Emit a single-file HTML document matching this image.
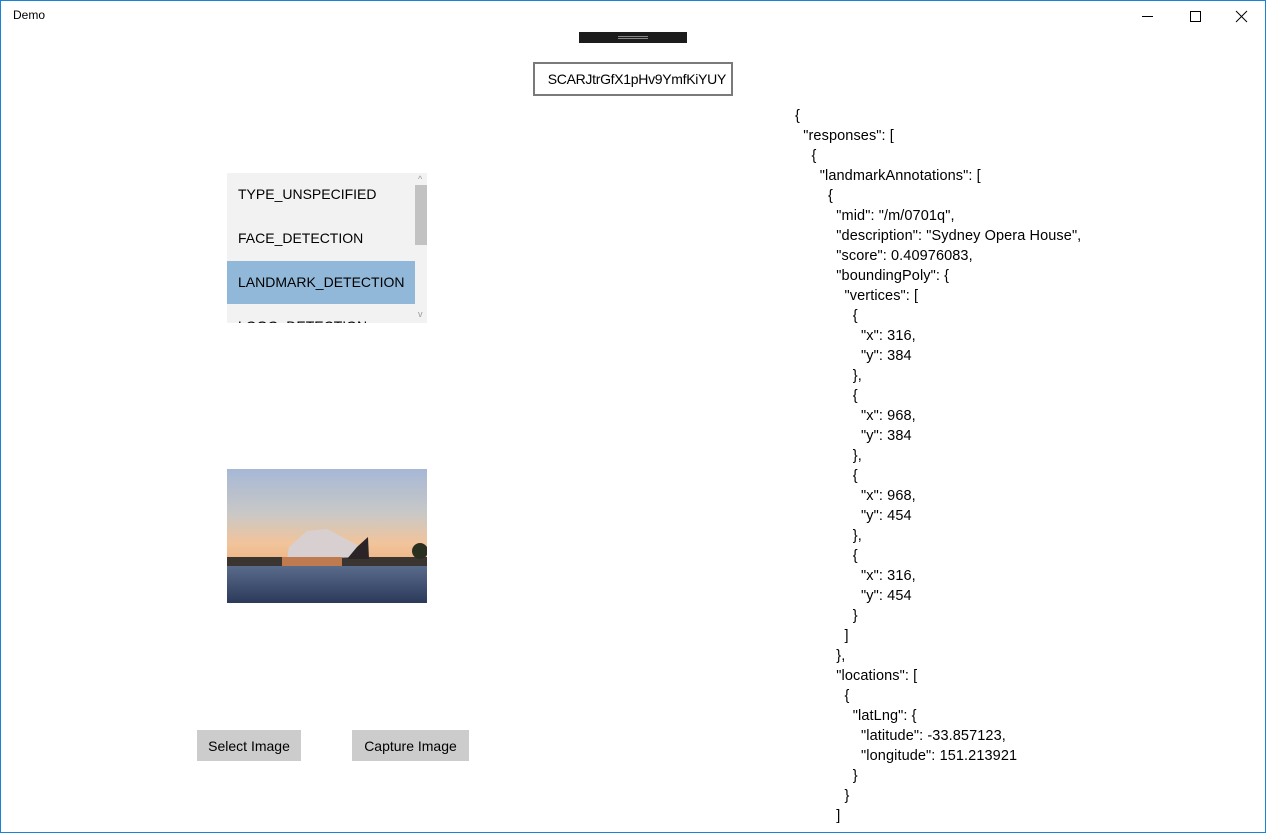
<!DOCTYPE html>
<html><head><style>
body{margin:0;width:1266px;height:833px;overflow:hidden;background:#fff;font-family:"Segoe UI","Liberation Sans",sans-serif;position:relative}
.frame{position:absolute;left:0;top:0;width:1264px;height:831px;border:1px solid #1883d7}
.t{position:absolute;font-size:12px;color:#000}
.json{position:absolute;left:795px;top:106px;font-size:14.5px;line-height:20px;color:#000;white-space:pre;letter-spacing:0.1px}
.list{position:absolute;left:227px;top:173px;width:200px;height:150px;background:#f2f2f2;overflow:hidden}
.item{position:absolute;left:0;width:188px;height:43px;font-size:14px;line-height:43px;padding-left:11px;box-sizing:border-box}
.btn{position:absolute;top:730px;height:31px;background:#ccc;font-size:14px;line-height:33px;text-align:center}
</style></head><body>
<div class="frame"></div>
<div class="t" style="left:13px;top:8px">Demo</div>
<svg style="position:absolute;left:1140px;top:9px" width="115" height="16">
<line x1="2" y1="7.5" x2="13" y2="7.5" stroke="#000"/>
<rect x="50.5" y="2.5" width="10" height="10" fill="none" stroke="#000"/>
<line x1="96" y1="2" x2="107" y2="13" stroke="#000"/><line x1="107" y1="2" x2="96" y2="13" stroke="#000"/>
</svg>
<div style="position:absolute;left:579px;top:32px;width:108px;height:11px;background:#1c1c1c"></div>
<div style="position:absolute;left:618px;top:36px;width:30px;height:1px;background:#888"></div>
<div style="position:absolute;left:618px;top:38px;width:30px;height:1px;background:#888"></div>
<div style="position:absolute;left:533px;top:62px;width:196px;height:30px;border:2px solid #7a7a7a;overflow:hidden;font-size:14px;line-height:30px;white-space:nowrap"><span style="position:absolute;right:5px;letter-spacing:-0.3px">SCARJtrGfX1pHv9YmfKiYUY</span></div>
<div class="list">
<div class="item" style="top:0">TYPE_UNSPECIFIED</div>
<div class="item" style="top:44px">FACE_DETECTION</div>
<div class="item" style="top:88px;background:#92b8d9">LANDMARK_DETECTION</div>
<div class="item" style="top:132px">LOGO_DETECTION</div>
<div style="position:absolute;left:188px;top:12px;width:12px;height:60px;background:#c2c2c2"></div>
<div style="position:absolute;left:191px;top:1px;font-size:9px;color:#999">^</div>
<div style="position:absolute;left:191px;top:136px;font-size:9px;color:#999">v</div>
</div>
<svg style="position:absolute;left:227px;top:469px" width="200" height="134">
<defs><linearGradient id="s" x1="0" y1="0" x2="0" y2="1"><stop offset="0" stop-color="#a6b8d6"/><stop offset="0.45" stop-color="#c9c8c6"/><stop offset="0.75" stop-color="#f2c49a"/><stop offset="1" stop-color="#e8b080"/></linearGradient>
<linearGradient id="w" x1="0" y1="0" x2="0" y2="1"><stop offset="0" stop-color="#5a6c8c"/><stop offset="1" stop-color="#2c3a5a"/></linearGradient></defs>
<rect width="200" height="100" fill="url(#s)"/>
<rect y="96" width="200" height="38" fill="url(#w)"/>
<rect x="0" y="88" width="200" height="9" fill="#3a3530"/>
<polygon points="60,90 62,78 80,62 100,60 115,68 130,76 140,88" fill="#d8d0d0"/>
<polygon points="120,90 130,78 141,68 142,90" fill="#2a2426"/>
<rect x="55" y="88" width="60" height="9" fill="#c07a50"/>
<circle cx="193" cy="82" r="8" fill="#2a3020"/>
</svg>
<div class="btn" style="left:197px;width:104px">Select Image</div>
<div class="btn" style="left:352px;width:117px">Capture Image</div>
<div class="json">{
  "responses": [
    {
      "landmarkAnnotations": [
        {
          "mid": "/m/0701q",
          "description": "Sydney Opera House",
          "score": 0.40976083,
          "boundingPoly": {
            "vertices": [
              {
                "x": 316,
                "y": 384
              },
              {
                "x": 968,
                "y": 384
              },
              {
                "x": 968,
                "y": 454
              },
              {
                "x": 316,
                "y": 454
              }
            ]
          },
          "locations": [
            {
              "latLng": {
                "latitude": -33.857123,
                "longitude": 151.213921
              }
            }
          ]</div>
</body></html>
